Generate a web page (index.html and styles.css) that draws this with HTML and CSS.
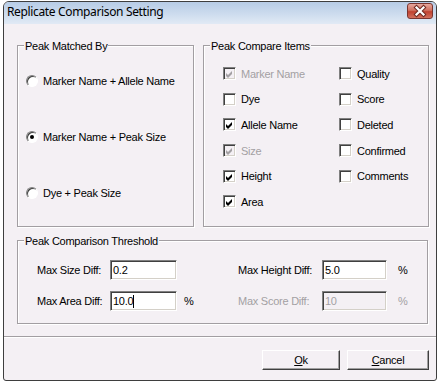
FILE: index.html
```html
<!DOCTYPE html>
<html>
<head>
<meta charset="utf-8">
<link rel="stylesheet" href="styles.css">
</head>
<body>
<div class="window">
  <div class="titlebar">
    <span class="title">Replicate Comparison Setting</span>
    <div class="close">
      <svg width="24" height="14" viewBox="0 0 24 14">
        <path d="M8.5 3.5 L15.5 10.5 M15.5 3.5 L8.5 10.5" stroke="#6d2a22" stroke-width="4.2" stroke-linecap="square"/>
        <path d="M8.5 3.5 L15.5 10.5 M15.5 3.5 L8.5 10.5" stroke="#fff" stroke-width="2.2" stroke-linecap="square"/>
      </svg>
    </div>
  </div>
  <div class="client">
    <div class="top-row">
      <div class="group g-match">
        <span class="legend">Peak Matched By</span>
        <div class="radios">
          <div class="radio"><span class="rb"></span><span>Marker Name + Allele Name</span></div>
          <div class="radio"><span class="rb"><span class="dot"></span></span><span>Marker Name + Peak Size</span></div>
          <div class="radio"><span class="rb"></span><span>Dye + Peak Size</span></div>
        </div>
      </div>
      <div class="group g-items">
        <span class="legend">Peak Compare Items</span>
        <div class="cbgrid">
          <div class="cbitem disabled"><span class="cb"><svg width="11" height="11" viewBox="0 0 11 11"><path d="M2 5 L4 7 L8 3 L8 6 L4 10 L2 8 Z"/></svg></span><span>Marker Name</span></div>
          <div class="cbitem"><span class="cb"></span><span>Dye</span></div>
          <div class="cbitem"><span class="cb"><svg width="11" height="11" viewBox="0 0 11 11"><path d="M2 5 L4 7 L8 3 L8 6 L4 10 L2 8 Z"/></svg></span><span>Allele Name</span></div>
          <div class="cbitem disabled"><span class="cb"><svg width="11" height="11" viewBox="0 0 11 11"><path d="M2 5 L4 7 L8 3 L8 6 L4 10 L2 8 Z"/></svg></span><span>Size</span></div>
          <div class="cbitem"><span class="cb"><svg width="11" height="11" viewBox="0 0 11 11"><path d="M2 5 L4 7 L8 3 L8 6 L4 10 L2 8 Z"/></svg></span><span>Height</span></div>
          <div class="cbitem"><span class="cb"><svg width="11" height="11" viewBox="0 0 11 11"><path d="M2 5 L4 7 L8 3 L8 6 L4 10 L2 8 Z"/></svg></span><span>Area</span></div>
          <div class="cbitem"><span class="cb"></span><span>Quality</span></div>
          <div class="cbitem"><span class="cb"></span><span>Score</span></div>
          <div class="cbitem"><span class="cb"></span><span>Deleted</span></div>
          <div class="cbitem"><span class="cb"></span><span>Confirmed</span></div>
          <div class="cbitem"><span class="cb"></span><span>Comments</span></div>
        </div>
      </div>
    </div>
    <div class="group g-thresh">
      <span class="legend">Peak Comparison Threshold</span>
      <div class="tgrid">
        <span class="lbl">Max Size Diff:</span>
        <span class="input">0.2</span>
        <span class="pct pct1"></span>
        <span class="lbl">Max Height Diff:</span>
        <span class="input">5.0</span>
        <span class="pct pct2">%</span>
        <span class="lbl">Max Area Diff:</span>
        <span class="input">10.0<span class="caret"></span></span>
        <span class="pct pct1">%</span>
        <span class="lbl dim">Max Score Diff:</span>
        <span class="input off">10</span>
        <span class="pct pct2 dim">%</span>
      </div>
    </div>
    <div class="sep"></div>
    <div class="buttons">
      <div class="btn btn-ok"><span><u>O</u>k</span></div>
      <div class="btn btn-cancel"><span><u>C</u>ancel</span></div>
    </div>
  </div>
</div>
</body>
</html>
```
FILE: styles.css
```css
body {
  margin: 0;
  background: #fff;
  font-family: "Liberation Sans", Arial, sans-serif;
  font-size: 11px;
  letter-spacing: -0.25px;
  color: #000;
}

.window {
  box-sizing: border-box;
  width: 434px;
  height: 380px;
  margin: 1px 0 0 3px;
  border: 1px solid #3e3e3e;
  border-radius: 6px 6px 3px 3px;
  overflow: hidden;
  display: flex;
  flex-direction: column;
  background: #f4f0f4;
}

.titlebar {
  height: 22px;
  flex: none;
  display: flex;
  justify-content: space-between;
  align-items: flex-start;
  background: linear-gradient(#b7cce6, #cddcee 55%, #e1eaf5);
}

.title {
  font-family: "Noto Sans", sans-serif;
  font-size: 12px;
  letter-spacing: -0.35px;
  line-height: 16px;
  margin: 2px 0 0 3px;
}

.close {
  box-sizing: border-box;
  width: 26px;
  height: 16px;
  margin: 1px 3px 0 0;
  border: 1px solid #7a3530;
  border-radius: 3px;
  background: linear-gradient(#e7a89d, #d0705f 45%, #c0412f 55%, #d2705d);
  display: flex;
  align-items: center;
  justify-content: center;
}

.client {
  flex: 1;
  padding: 21px 7px 0 13px;
}

.top-row {
  display: flex;
  gap: 9px;
}

.group {
  position: relative;
  box-sizing: border-box;
  border: 1px solid #a29ea2;
  box-shadow: 1px 1px 0 #fff, inset 1px 1px 0 #fff;
}

.legend {
  position: absolute;
  top: -6px;
  left: 6px;
  padding: 0 1px;
  background: #f4f0f4;
  line-height: 13px;
}

.g-match {
  width: 177px;
  height: 182px;
  padding: 27px 0 0 8px;
}

.radios {
  display: flex;
  flex-direction: column;
  gap: 40px;
}

.radio {
  display: flex;
  align-items: center;
  height: 16px;
  gap: 5px;
}

.rb {
  box-sizing: border-box;
  width: 12px;
  height: 12px;
  border-radius: 50%;
  border: 1px solid;
  border-color: #808080 #fff #fff #808080;
  background: #fff;
  box-shadow: inset 1px 1px 0 #404040;
  display: flex;
  align-items: center;
  justify-content: center;
}

.dot {
  width: 4px;
  height: 4px;
  border-radius: 50%;
  background: #000;
}

.g-items {
  width: 226px;
  height: 182px;
  padding: 15px 0 0 19px;
}

.cbgrid {
  display: grid;
  grid-template-rows: repeat(6, 25.6px);
  grid-template-columns: 116px auto;
  grid-auto-flow: column;
}

.cbitem {
  display: flex;
  align-items: center;
  gap: 5px;
}

.cb {
  box-sizing: border-box;
  width: 13px;
  height: 13px;
  border: 1px solid;
  border-color: #808080 #fff #fff #808080;
  box-shadow: inset 1px 1px 0 #404040, inset -1px -1px 0 #d4d0c8;
  background: #fff;
  display: block;
}

.cb svg {
  display: block;
  fill: #000;
}

.cbitem.disabled {
  color: #a3a0a3;
}

.cbitem.disabled .cb {
  background: #f4f0f4;
}

.cbitem.disabled .cb svg {
  fill: #a3a0a3;
}

.g-thresh {
  width: 411px;
  height: 84px;
  margin-top: 13px;
  padding: 19px 0 0 19px;
}

.tgrid {
  display: grid;
  grid-template-columns: 73px 67px 61px 84px 65px auto;
  grid-template-rows: 20px 20px;
  row-gap: 11px;
  align-items: center;
}

.input {
  box-sizing: border-box;
  height: 20px;
  border: 1px solid;
  border-color: #808080 #fff #fff #808080;
  box-shadow: inset 1px 1px 0 #404040, inset -1px -1px 0 #d4d0c8;
  background: #fff;
  padding-left: 2px;
  display: flex;
  align-items: center;
}

.input.off {
  background: #f4f0f4;
  color: #a3a0a3;
}

.caret {
  display: inline-block;
  width: 1px;
  height: 13px;
  background: #000;
}

.pct1 {
  padding-left: 7px;
}

.pct2 {
  padding-left: 11px;
}

.dim {
  color: #a3a0a3;
}

.sep {
  margin: 12px -7px 0 -13px;
  border-top: 1px solid #a29ea2;
  border-bottom: 1px solid #fff;
}

.buttons {
  display: flex;
  justify-content: flex-end;
  gap: 7px;
  margin-top: 12px;
}

.btn {
  box-sizing: border-box;
  height: 20px;
  border: 1px solid;
  border-color: #fff #404040 #404040 #fff;
  box-shadow: inset -1px -1px 0 #a0a0a0;
  display: flex;
  align-items: center;
  justify-content: center;
}

.btn-ok {
  width: 78px;
}

.btn-cancel {
  width: 82px;
}
```
